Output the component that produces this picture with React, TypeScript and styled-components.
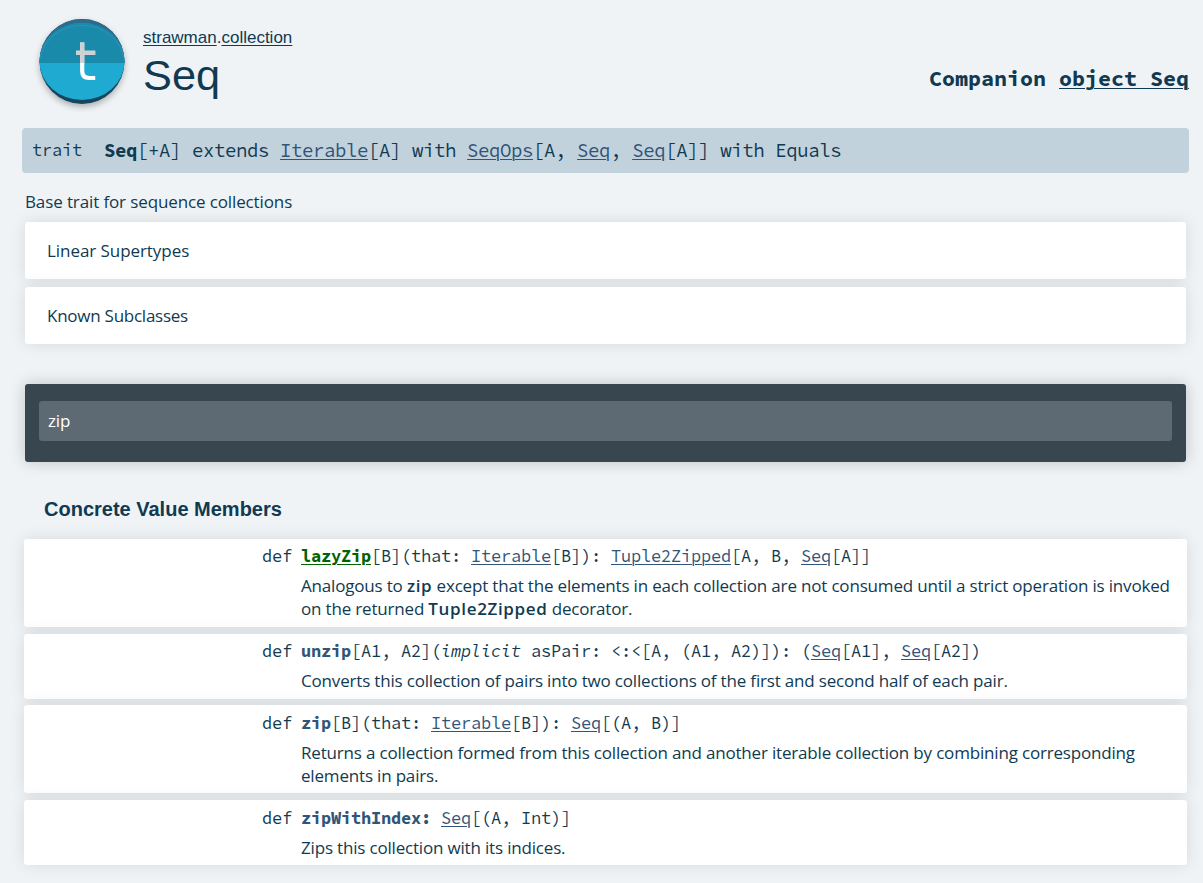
import React from "react";
import styled, { createGlobalStyle } from "styled-components";

const mono = `"Source Code Pro", "Noto Sans Mono", "DejaVu Sans Mono", monospace`;
const sans = `"Open Sans", "Noto Sans", sans-serif`;
const heading = `"Liberation Sans", Arial, sans-serif`;

const GlobalStyle = createGlobalStyle`
  * { box-sizing: border-box; }
  body {
    margin: 0;
    background: #eff3f6;
    color: #103a51;
    font-family: ${sans};
    font-size: 17px;
  }
`;

const Page = styled.main`
  height: 883px;
  overflow: hidden;
  display: flex;
  flex-direction: column;
`;

const Header = styled.header`
  height: 128px;
  padding: 0 14px 0 32px;
  display: flex;
  align-items: flex-start;
`;

const Badge = styled.svg`
  display: block;
  flex: none;
  width: 100px;
  height: 112px;
`;

const Titles = styled.div`
  flex: 1;
  padding: 28px 0 0 11px;
  font-family: ${heading};
`;

const Owner = styled.p`
  margin: 0;
  font-size: 17px;
  line-height: 20px;
`;

const Title = styled.h1`
  margin: 2px 0 0;
  font-size: 43.33px;
  line-height: 50px;
  font-weight: 400;
`;

const Companion = styled.h4`
  margin: 65px 0 0;
  font-family: ${mono};
  font-size: 21.67px;
  line-height: 28px;
  font-weight: 700;
  white-space: pre;
`;

const PlainLink = styled.a`
  text-decoration: underline;
  text-underline-offset: 2px;
  text-decoration-thickness: 1px;
`;

const TypeLink = styled(PlainLink)`
  color: #315479;
`;

const Signature = styled.div`
  height: 45px;
  margin: 0 14px 0 22px;
  padding: 0 10px 1px;
  display: flex;
  align-items: center;
  border-radius: 4px;
  background: #c2d2dc;
  font-family: ${mono};
  font-size: 19px;
  letter-spacing: -0.4px;
  line-height: 25px;
  white-space: pre;
`;

const Kind = styled.span`
  width: 72px;
  font-size: 17px;
  letter-spacing: -0.2px;
`;

const Summary = styled.p`
  margin: 17px 25px 8px;
  line-height: 24px;
  letter-spacing: -0.12px;
`;

const Panel = styled.section<{ $tracking: number }>`
  height: 57px;
  margin: 0 17px 8px 25px;
  padding: 0 22px;
  display: flex;
  align-items: center;
  border-radius: 3px;
  background: #fff;
  box-shadow: 0 0 16px rgba(0, 0, 0, 0.1);
  letter-spacing: ${(p) => p.$tracking}px;
`;

const Search = styled.div`
  height: 78px;
  margin: 32px 17px 0 25px;
  padding: 17px 14px 21px;
  border-radius: 3px;
  background: #384650;
  box-shadow: 0 0 16px rgba(0, 0, 0, 0.2);
`;

const Field = styled.div`
  height: 40px;
  padding: 0 9px 1px;
  display: flex;
  align-items: center;
  border-radius: 3px;
  background: #5e6a73;
  color: #fff;
  letter-spacing: -0.1px;
`;

const SectionTitle = styled.h3`
  margin: 35px 44px 17.7px;
  font-family: ${heading};
  font-size: 20px;
  line-height: 24px;
  font-weight: 700;
`;

const Members = styled.ol`
  list-style: none;
  margin: 0 16px 0 24px;
  padding: 0;
  display: flex;
  flex-direction: column;
  gap: 6.86px;
`;

const Member = styled.li`
  display: grid;
  grid-template-columns: 268px 1fr;
  column-gap: 9px;
  padding: 6.5px 10px 6.5px 0;
  border-radius: 3px;
  background: #fff;
  box-shadow: 0 0 16px rgba(0, 0, 0, 0.1);
`;

const Modifier = styled.span`
  text-align: right;
  font-family: ${mono};
  letter-spacing: -0.2px;
  line-height: 23px;
`;

const MemberSignature = styled.div`
  font-family: ${mono};
  letter-spacing: -0.2px;
  line-height: 23px;
  white-space: pre;
`;

const Name = styled.b<{ $implicit?: boolean }>`
  color: ${(p) => (p.$implicit ? "#006400" : "#315479")};
  text-decoration: ${(p) => (p.$implicit ? "underline" : "none")};
  text-underline-offset: 2px;
  text-decoration-thickness: 1px;
`;

const Doc = styled.p`
  grid-column: 2;
  margin: 6px 0 0;
  line-height: 23px;
  letter-spacing: -0.18px;

  b {
    font-weight: 600;
    letter-spacing: 0.65px;
  }
`;

function TraitBadge() {
  return (
    <Badge viewBox="0 0 100 112" aria-label="Trait">
      <defs>
        <clipPath id="top-half">
          <rect width="100" height="63" />
        </clipPath>
        <filter id="badge-shadow" x="-20%" y="-20%" width="140%" height="150%">
          <feDropShadow dx="0" dy="3" stdDeviation="3" floodOpacity="0.28" />
        </filter>
      </defs>
      <circle cx="50" cy="61.5" r="42.5" fill="#17455c" filter="url(#badge-shadow)" />
      <circle cx="50" cy="61.5" r="42.5" fill="#2c6c8d" clipPath="url(#top-half)" />
      <ellipse cx="50" cy="61.5" rx="42.5" ry="38.5" fill="#1eaad1" />
      <ellipse cx="50" cy="61.5" rx="42.5" ry="38.5" fill="#198aaa" clipPath="url(#top-half)" />
      <path d="M8 58A42.5 38.5 0 0 1 92 58" fill="none" stroke="#3295b2" strokeWidth="0.8" />
      <path d="M50 42.5V71Q50 78 57 78H63M44 52.8H63" transform="translate(.2 0)" fill="none" stroke="#fff" strokeWidth="4.2" />
      <path d="M50 42.5V71Q50 78 57 78H63M44 52.8H63" transform="translate(.2 0)" fill="none" stroke="#cfd0d1" strokeWidth="4.2" clipPath="url(#top-half)" />
    </Badge>
  );
}

export default function App() {
  return (
    <>
      <GlobalStyle />
      <Page>
        <Header>
          <TraitBadge />
          <Titles>
            <Owner>
              <PlainLink>strawman</PlainLink>.<PlainLink>collection</PlainLink>
            </Owner>
            <Title>Seq</Title>
          </Titles>
          <Companion>
            Companion <PlainLink>object Seq</PlainLink>
          </Companion>
        </Header>
        <Signature>
          <Kind>trait</Kind>
          <span>
            <b>Seq</b>[+A] extends <TypeLink>Iterable</TypeLink>[A] with <TypeLink>SeqOps</TypeLink>[A,{" "}
            <TypeLink>Seq</TypeLink>, <TypeLink>Seq</TypeLink>[A]] with Equals
          </span>
        </Signature>
        <Summary>Base trait for sequence collections</Summary>
        <Panel $tracking={-0.06}>Linear Supertypes</Panel>
        <Panel $tracking={-0.25}>Known Subclasses</Panel>
        <Search>
          <Field>zip</Field>
        </Search>
        <SectionTitle>Concrete Value Members</SectionTitle>
        <Members>
          <Member>
            <Modifier>def</Modifier>
            <MemberSignature>
              <Name $implicit>lazyZip</Name>[B](that: <TypeLink>Iterable</TypeLink>[B]):{" "}
              <TypeLink>Tuple2Zipped</TypeLink>[A, B, <TypeLink>Seq</TypeLink>[A]]
            </MemberSignature>
            <Doc>
              Analogous to <b>zip</b> except that the elements in each collection are not consumed until a strict
              operation is invoked on the returned <b>Tuple2Zipped</b> decorator.
            </Doc>
          </Member>
          <Member>
            <Modifier>def</Modifier>
            <MemberSignature>
              <Name>unzip</Name>[A1, A2](<i>implicit</i> asPair: &lt;:&lt;[A, (A1, A2)]): (
              <TypeLink>Seq</TypeLink>[A1], <TypeLink>Seq</TypeLink>[A2])
            </MemberSignature>
            <Doc>Converts this collection of pairs into two collections of the first and second half of each pair.</Doc>
          </Member>
          <Member>
            <Modifier>def</Modifier>
            <MemberSignature>
              <Name>zip</Name>[B](that: <TypeLink>Iterable</TypeLink>[B]): <TypeLink>Seq</TypeLink>[(A, B)]
            </MemberSignature>
            <Doc>
              Returns a collection formed from this collection and another iterable collection by combining
              corresponding elements in pairs.
            </Doc>
          </Member>
          <Member>
            <Modifier>def</Modifier>
            <MemberSignature>
              <Name>zipWithIndex:</Name> <TypeLink>Seq</TypeLink>[(A, Int)]
            </MemberSignature>
            <Doc>Zips this collection with its indices.</Doc>
          </Member>
        </Members>
      </Page>
    </>
  );
}
